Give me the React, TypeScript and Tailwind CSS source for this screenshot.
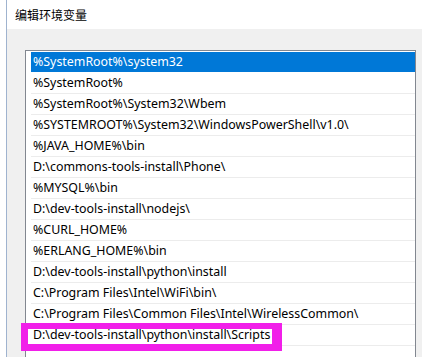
import React from "react";

const items = [
  "%SystemRoot%\\system32",
  "%SystemRoot%",
  "%SystemRoot%\\System32\\Wbem",
  "%SYSTEMROOT%\\System32\\WindowsPowerShell\\v1.0\\",
  "%JAVA_HOME%\\bin",
  "D:\\commons-tools-install\\Phone\\",
  "%MYSQL%\\bin",
  "D:\\dev-tools-install\\nodejs\\",
  "%CURL_HOME%",
  "%ERLANG_HOME%\\bin",
  "D:\\dev-tools-install\\python\\install",
  "C:\\Program Files\\Intel\\WiFi\\bin\\",
  "C:\\Program Files\\Common Files\\Intel\\WirelessCommon\\",
  "D:\\dev-tools-install\\python\\install\\Scripts",
  "",
];

export default function App() {
  return (
    <div
      className="w-[422px] h-[357px] overflow-hidden bg-white flex"
      style={{ fontFamily: '"Noto Sans", "Noto Sans CJK SC", sans-serif' }}
    >
      <div className="w-[6px] shrink-0 bg-white" />
      <div className="flex-1 flex flex-col border-l border-[#9fb3cf]">
        <div className="h-[29px] shrink-0 bg-white flex items-center pl-[8px] text-[12px] text-black" style={{ fontFamily: '"Noto Sans CJK SC", sans-serif' }}>
          编辑环境变量
        </div>
        <div className="flex-1 bg-[#f0f0f0] pl-[18px] pr-[6px] pt-[21px]">
          <div className="relative h-[320px] bg-white border border-[#828790] pl-[5px] pr-0 pt-[1px]">
            {items.map((t, i) => (
              <div
                key={i}
                className={
                  "h-[21px] border-b text-[12.4px] leading-[20px] pl-[2px] whitespace-nowrap " +
                  (i === 0
                    ? "bg-[#0078d7] text-white border-white"
                    : "text-black border-[#ececec]")
                }
              >
                {t}
              </div>
            ))}
            <div className="absolute left-[-5px] top-[272px] w-[261px] h-[28px] border-l-[7px] border-r-[10px] border-t-[6px] border-b-[7px] border-[#f11fe9]" />
          </div>
        </div>
      </div>
    </div>
  );
}
